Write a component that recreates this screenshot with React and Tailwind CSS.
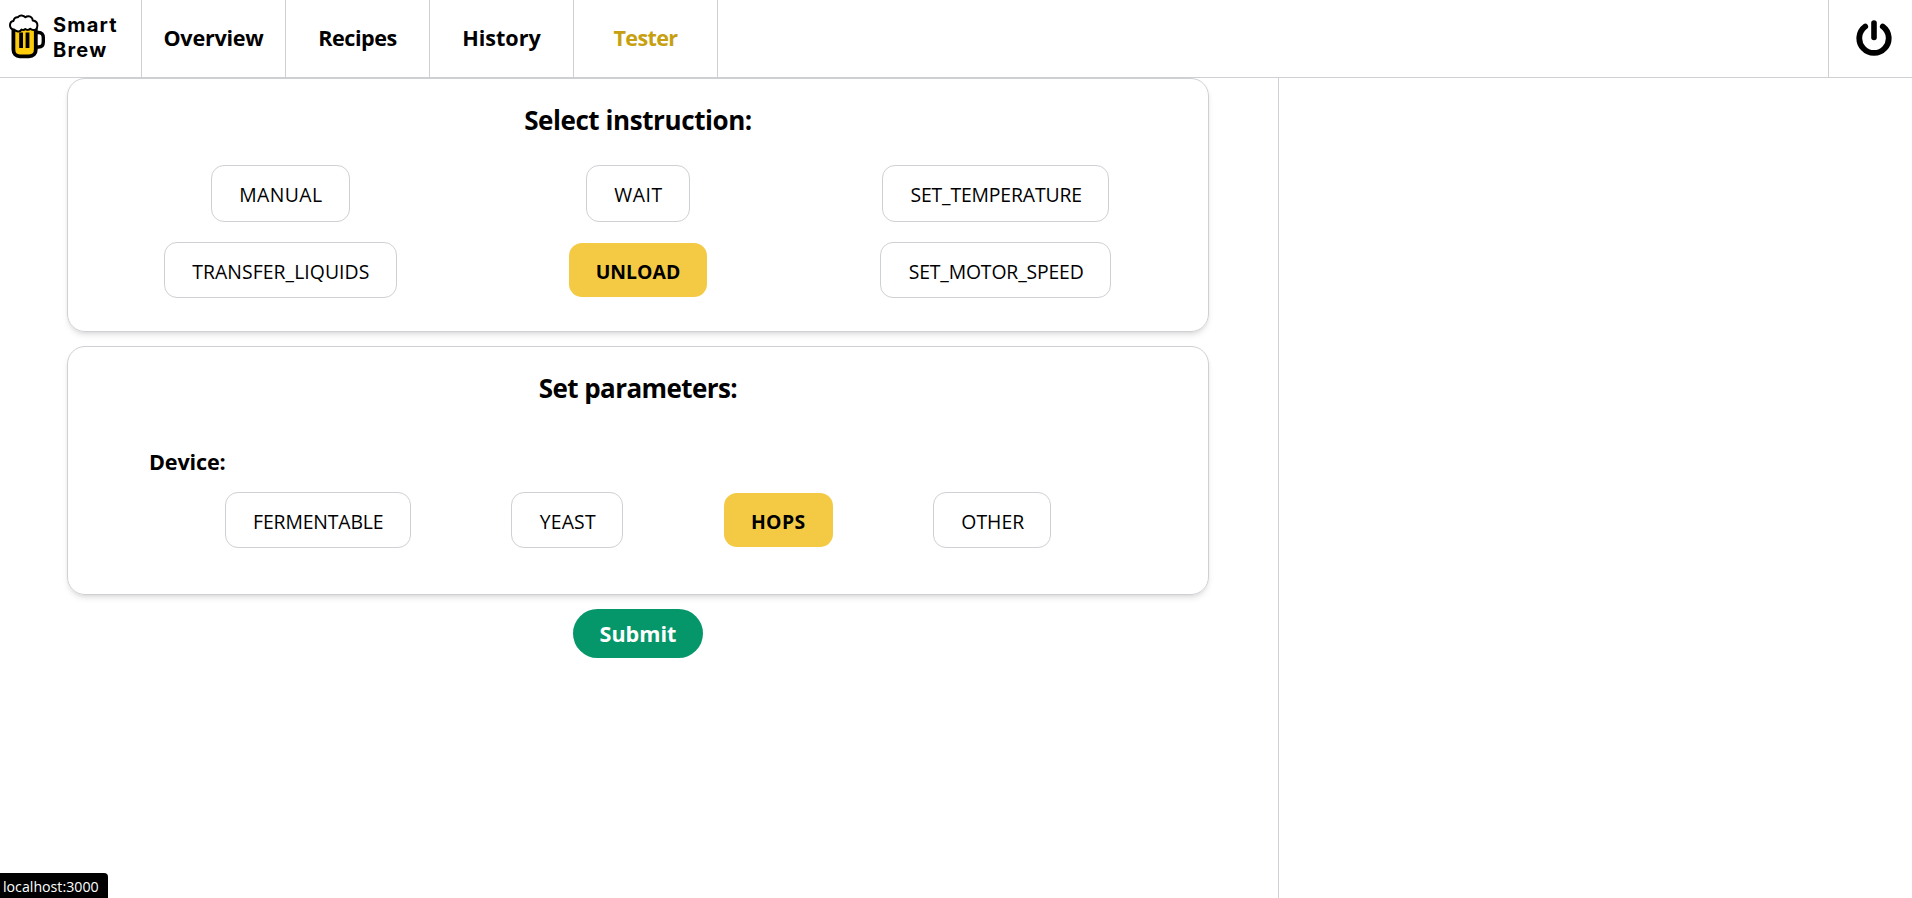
const NAV = [
  { label: "Overview", cls: "tracking-[-0.25px]" },
  { label: "Recipes", cls: "tracking-[-0.45px]" },
  { label: "History", cls: "tracking-[-0.05px]" },
  { label: "Tester", cls: "text-[#c6a00f] tracking-[-0.65px]" },
];

const INSTRUCTIONS = [
  { label: "MANUAL", cls: "h-[57px] w-[139px] pl-px tracking-[0.4px]" },
  { label: "WAIT", cls: "h-[57px] w-[104px] pl-px tracking-[0.5px]" },
  { label: "SET_TEMPERATURE", cls: "h-[57px] w-[227px] pl-px tracking-[-0.15px]" },
  { label: "TRANSFER_LIQUIDS", cls: "h-[56px] w-[233px] pl-px tracking-[0.05px]" },
  { label: "UNLOAD", active: true, cls: "h-[54px] w-[138px]" },
  { label: "SET_MOTOR_SPEED", cls: "h-[56px] w-[231px] pl-px tracking-[-0.15px]" },
];

const DEVICES = [
  { label: "FERMENTABLE", cls: "h-[56px] w-[186px] pl-px tracking-[-0.15px]" },
  { label: "YEAST", cls: "h-[56px] w-[112px] pl-px tracking-[0.2px]" },
  { label: "HOPS", active: true, cls: "h-[54px] w-[109px] tracking-[0.4px]" },
  { label: "OTHER", cls: "h-[56px] w-[118px] pl-px" },
];

function Option({ label, active, cls }) {
  const state = active
    ? "bg-[#f4ca44] font-bold"
    : "border border-[#cfd0d3] bg-white font-normal";
  return (
    <button
      className={`flex items-center justify-center rounded-[13px] pt-[3px] text-[19.4px] leading-none ${state} ${cls}`}
    >
      {label}
    </button>
  );
}

function BeerLogo() {
  return (
    <svg className="h-[46px] w-[37px]" viewBox="0 0 37 46" fill="none">
      <path d="M28.500 18.500h2.200c3 0 4.600 2.200 4.600 5v4.500c0 3-1.700 5-4.600 5h-2.200" stroke="#000" strokeWidth="3.400" />
      <path
        d="M5.400 14v21.500c0 4.200 2.600 6.800 6.400 6.800h9.200c4.200 0 6.800-2.600 6.800-6.800V14z"
        fill="#fbcb0c"
        stroke="#000"
        strokeWidth="3.800"
      />
      <path d="M13.100 18.500v15.500M19.500 18.500v15.500" stroke="#000" strokeWidth="3.800" />
      <path
        d="M6 15.500C3.300 15.300 2 13.500 2 11.200c0-2.300 1.300-4 3.500-4.300C5.900 4.300 7.600 2.800 10 3.200c1.200-1.500 3-2 4.700-1.500 1.200.3 2 .8 2.700 1.600 1.600-1.500 4.600-1.500 6.200.3.800.9 1.100 1.800 1.100 2.900 2.800.3 4.700 2.300 4.700 4.900 0 2.600-1.800 4.600-4.100 4.600-1.400 0-2.300-.5-3-1.200-1.200 1.300-3.600 1.500-5 .2-1 1-2.600 1.200-3.800.5-.8 1.600-2.600 2.300-4.400 1.700-1.500-.4-2.500-1-3.100-1.700z"
        fill="#fff"
        stroke="#000"
        strokeWidth="2"
        strokeLinejoin="round"
      />
    </svg>
  );
}

function PowerIcon() {
  return (
    <svg className="h-[36px] w-[36px]" viewBox="0 0 36 36" fill="none" stroke="#000" strokeLinecap="round">
      <path d="M9.200 6.500A14.700 14.700 0 1 0 26.800 6.500" strokeWidth="5.800" />
      <path d="M18 3v14.500" strokeWidth="5.600" />
    </svg>
  );
}

export default function App() {
  return (
    <div className="flex h-screen flex-col overflow-hidden bg-white font-['Open_Sans',sans-serif] text-black">
      <header className="flex h-[78px] shrink-0 border-b border-[#cfd0d3]">
        <a className="flex w-[142px] items-center border-r border-[#cfd0d3] pb-[3px] pl-2">
          <BeerLogo />
          <span className="mt-[2px] ml-2 font-['Inter',sans-serif] text-[20px] leading-[25px] font-bold tracking-[1.2px]">
            Smart
            <br />
            Brew
          </span>
        </a>
        <nav className="flex">
          {NAV.map(({ label, cls }) => (
            <a
              key={label}
              className={`flex w-[144px] items-center justify-center border-r border-[#cfd0d3] pb-[2px] text-[21.6px] leading-none font-bold ${cls}`}
            >
              {label}
            </a>
          ))}
        </nav>
        <button className="ml-auto flex w-[84px] items-center justify-center border-l border-[#cfd0d3] pr-px pb-[2px] pl-[8px]">
          <PowerIcon />
        </button>
      </header>

      <div className="flex grow">
        <main className="flex w-[1279px] flex-col items-center border-r border-[#cfd0d3] pr-[2px]">
          <section className="flex h-[254px] w-[1142px] flex-col items-center rounded-[18px] border border-[#cfd0d3] shadow-md">
            <h2 className="mt-[21px] text-[26px] leading-[40px] font-bold tracking-[-0.42px]">
              Select instruction:
            </h2>
            <div className="mt-[25px] grid w-[1073px] grid-cols-3 grid-rows-[57px_56px] place-items-center gap-y-5">
              {INSTRUCTIONS.map((item) => (
                <Option key={item.label} {...item} />
              ))}
            </div>
          </section>

          <section className="mt-[14px] flex h-[249px] w-[1142px] flex-col items-center rounded-[18px] border border-[#cfd0d3] shadow-md">
            <h2 className="mt-[21px] text-[26px] leading-[40px] font-bold tracking-[-0.58px]">
              Set parameters:
            </h2>
            <h3 className="mt-[36px] w-full pl-[81px] text-[21.6px] leading-[36px] font-bold tracking-[-0.15px]">
              Device:
            </h3>
            <div className="mt-[12px] flex h-[56px] items-center gap-[100.500px]">
              {DEVICES.map((item) => (
                <Option key={item.label} {...item} />
              ))}
            </div>
          </section>

          <button className="mt-[14px] flex h-[49px] w-[130px] items-center justify-center rounded-full bg-[#059669] text-[21.6px] leading-none font-bold text-white">
            Submit
          </button>
        </main>
        <aside className="grow" />
      </div>

      <div className="absolute bottom-0 left-0 flex h-[25px] w-[108px] items-center rounded-tr-[4px] bg-black pt-[3px] pl-[3px] text-[14.200px] leading-none text-white">
        localhost:3000
      </div>
    </div>
  );
}
